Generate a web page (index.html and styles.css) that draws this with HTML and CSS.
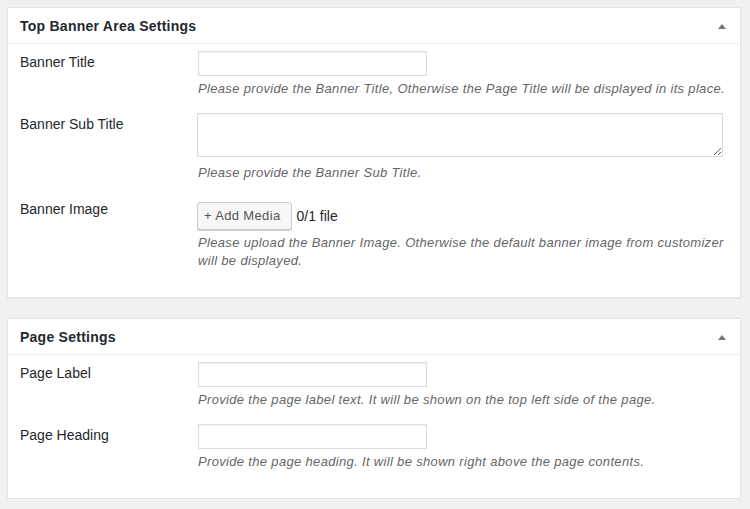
FILE: index.html
```html
<!DOCTYPE html>
<html>
<head>
<meta charset="utf-8">
<link rel="stylesheet" href="styles.css">
</head>
<body>
<div class="page">
  <section class="box">
    <header class="box-head">
      <h2>Top Banner Area Settings</h2>
      <span class="toggle"></span>
    </header>
    <div class="box-body">
      <div class="row">
        <div class="label">Banner Title</div>
        <div class="field">
          <input type="text" class="text">
          <p class="desc">Please provide the Banner Title, Otherwise the Page Title will be displayed in its place.</p>
        </div>
      </div>
      <div class="row">
        <div class="label">Banner Sub Title</div>
        <div class="field">
          <textarea class="area"></textarea>
          <p class="desc">Please provide the Banner Sub Title.</p>
        </div>
      </div>
      <div class="row">
        <div class="label label-img">Banner Image</div>
        <div class="field">
          <div class="media">
            <button class="btn">+ Add Media</button>
            <span class="count">0/1 file</span>
          </div>
          <p class="desc">Please upload the Banner Image. Otherwise the default banner image from customizer will be displayed.</p>
        </div>
      </div>
    </div>
  </section>
  <section class="box">
    <header class="box-head">
      <h2>Page Settings</h2>
      <span class="toggle"></span>
    </header>
    <div class="box-body">
      <div class="row">
        <div class="label">Page Label</div>
        <div class="field">
          <input type="text" class="text">
          <p class="desc">Provide the page label text. It will be shown on the top left side of the page.</p>
        </div>
      </div>
      <div class="row">
        <div class="label">Page Heading</div>
        <div class="field">
          <input type="text" class="text">
          <p class="desc">Provide the page heading. It will be shown right above the page contents.</p>
        </div>
      </div>
    </div>
  </section>
</div>
</body>
</html>
```
FILE: styles.css
```css
html, body {
  margin: 0;
  padding: 0;
  background: #f1f1f1;
}
body {
  font-family: "Liberation Sans", Arial, sans-serif;
  color: #23282d;
  font-size: 13px;
}
.page {
  padding: 7px 9px 0 7px;
  display: flex;
  flex-direction: column;
  gap: 20px;
}
.box {
  background: #fff;
  border: 1px solid #e5e5e5;
  box-shadow: 0 1px 1px rgba(0,0,0,.04);
}
.box-head {
  box-sizing: border-box;
  height: 36px;
  padding: 1px 14px 0 12px;
  border-bottom: 1px solid #eee;
  display: flex;
  align-items: center;
  justify-content: space-between;
}
.box-head h2 {
  margin: 0;
  font-size: 14px;
  font-weight: bold;
  letter-spacing: 0.25px;
  color: #23282d;
}
.toggle {
  width: 0;
  height: 0;
  border-left: 4px solid transparent;
  border-right: 4px solid transparent;
  border-bottom: 5px solid #72777c;
  margin-top: 1px;
}
.box-body {
  padding-bottom: 19px;
}
.row {
  display: flex;
  padding: 7px 8px 9px 12px;
}
.label {
  width: 178px;
  flex: none;
  padding-top: 1px;
  font-size: 14px;
  line-height: 20px;
  color: #23282d;
}
.label-img {
  padding-top: 2px;
}
.field {
  flex: 1;
  min-width: 0;
}
.text {
  display: block;
  box-sizing: border-box;
  width: 229px;
  height: 25px;
  margin: 0;
  border: 1px solid #ddd;
  box-shadow: inset 0 1px 2px rgba(0,0,0,.07);
  background: #fff;
  padding: 3px 5px;
}
.area {
  display: block;
  box-sizing: border-box;
  width: 526px;
  height: 44px;
  margin: 0 0 0 -1px;
  border: 1px solid #ddd;
  box-shadow: inset 0 1px 2px rgba(0,0,0,.07);
  background: #fff;
  padding: 3px 5px;
}
.desc {
  margin: 4px 0 -1px 0;
  font-size: 13px;
  line-height: 18px;
  font-style: italic;
  letter-spacing: 0.33px;
  color: #666;
}
.area + .desc {
  margin-top: 7px;
}
.media {
  display: flex;
  align-items: center;
  gap: 5px;
  margin-top: 5px;
}
.btn {
  box-sizing: border-box;
  height: 28px;
  margin: 0 0 0 -1px;
  padding: 0 10px 1px 6px;
  border: 1px solid #ccc;
  border-radius: 3px;
  background: #f7f7f7;
  box-shadow: 0 1px 0 #ccc;
  font-family: "Liberation Sans", Arial, sans-serif;
  font-size: 13px;
  letter-spacing: 0.35px;
  color: #555;
}
.count {
  font-size: 14px;
  color: #23282d;
}
```
